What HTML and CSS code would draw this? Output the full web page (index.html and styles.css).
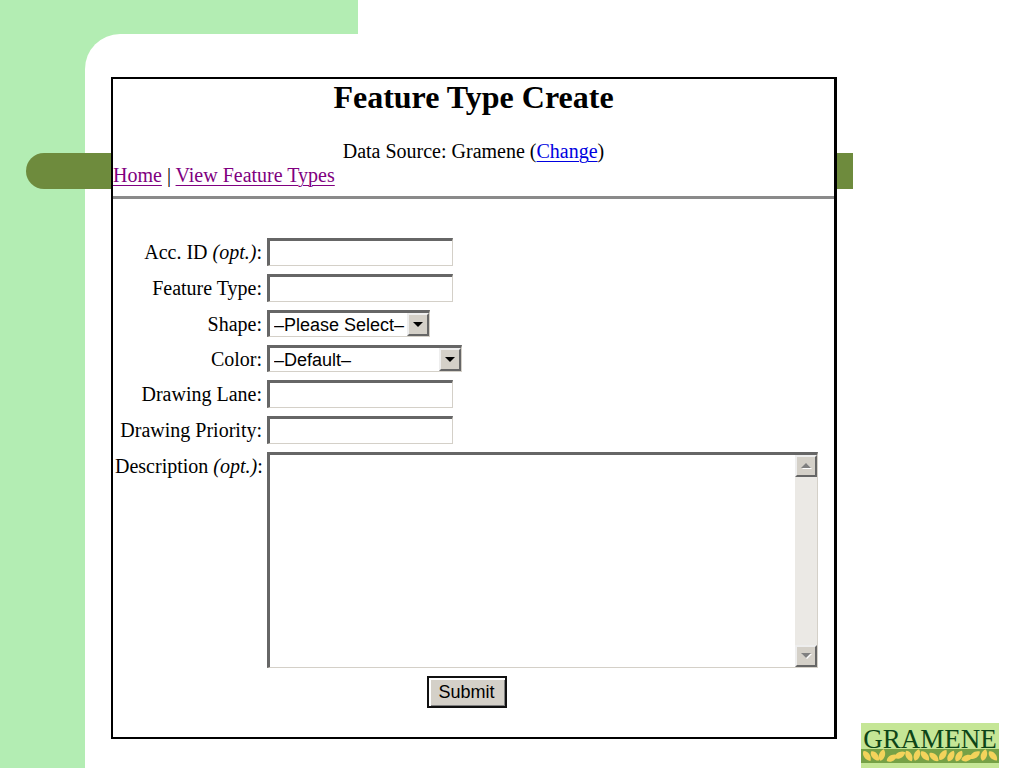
FILE: index.html
```
<!DOCTYPE html>
<html lang="en">
<head>
    <meta charset="UTF-8">
    <meta name="viewport" content="width=device-width, initial-scale=1.0">
    <title>Feature Type Create</title>
    <link rel="stylesheet" href="styles.css">
</head>
<body>
    <div class="slide">
        <div class="sheet">
            <div class="title-bar"></div>
            <main class="frame">
                <h1>Feature Type Create</h1>
                <p class="source">Data Source: Gramene (<a href="#change">Change</a>)</p>
                <nav><a href="#home">Home</a> | <a href="#types">View Feature Types</a></nav>
                <hr>
                <form id="featureTypeForm">
                    <div class="row">
                        <label for="accId">Acc. ID <i>(opt.)</i>:</label>
                        <input type="text" id="accId" name="accId">
                    </div>
                    <div class="row">
                        <label for="featureType">Feature Type:</label>
                        <input type="text" id="featureType" name="featureType">
                    </div>
                    <div class="row">
                        <label for="shape">Shape:</label>
                        <div class="select-box shape-box">
                            <select id="shape" name="shape">
                                <option>–Please Select–</option>
                            </select>
                            <span class="arrow-button"><svg width="10" height="5" viewBox="0 0 10 5"><path d="M0 0h10L5 5z"/></svg></span>
                        </div>
                    </div>
                    <div class="row">
                        <label for="color">Color:</label>
                        <div class="select-box color-box">
                            <select id="color" name="color">
                                <option>–Default–</option>
                            </select>
                            <span class="arrow-button"><svg width="10" height="5" viewBox="0 0 10 5"><path d="M0 0h10L5 5z"/></svg></span>
                        </div>
                    </div>
                    <div class="row">
                        <label for="lane">Drawing Lane:</label>
                        <input type="text" id="lane" name="lane">
                    </div>
                    <div class="row">
                        <label for="priority">Drawing Priority:</label>
                        <input type="text" id="priority" name="priority">
                    </div>
                    <div class="row">
                        <label for="description">Description <i>(opt.)</i>:</label>
                        <div class="textarea-box">
                            <textarea id="description" name="description"></textarea>
                            <div class="scrollbar">
                                <span class="arrow-button disabled"><svg width="11" height="6" viewBox="0 0 11 6"><path fill="#fff" d="M1 6h10L6 1z"/><path d="M0 5h10L5 0z"/></svg></span>
                                <span class="arrow-button disabled"><svg width="11" height="6" viewBox="0 0 11 6"><path fill="#fff" d="M1 1h10L6 6z"/><path d="M0 0h10L5 5z"/></svg></span>
                            </div>
                        </div>
                    </div>
                    <button type="submit">Submit</button>
                </form>
            </main>
            <div class="logo">
                <span class="logo-name">GRAMENE</span>
                <svg class="logo-leaves" viewBox="0 0 138 14" preserveAspectRatio="none">
                    <defs>
                        <path id="leaf" d="M-6 0C-4-4 3-4 6 0C3 4-4 4-6 0z"/>
                    </defs>
                    <g fill="#f3d35b">
                        <use href="#leaf" transform="translate(6 7) rotate(55)"/>
                        <use href="#leaf" transform="translate(14 7) rotate(50)"/>
                        <use href="#leaf" transform="translate(21 6) rotate(-72)"/>
                        <use href="#leaf" transform="translate(31 9) rotate(-30)"/>
                        <use href="#leaf" transform="translate(39 6) rotate(-28)"/>
                        <use href="#leaf" transform="translate(48 7) rotate(62)"/>
                        <use href="#leaf" transform="translate(56 6) rotate(-70)"/>
                        <use href="#leaf" transform="translate(64 7) rotate(48)"/>
                        <use href="#leaf" transform="translate(73 8) rotate(42)"/>
                        <use href="#leaf" transform="translate(82 6) rotate(-55)"/>
                        <use href="#leaf" transform="translate(90 7) rotate(-62)"/>
                        <use href="#leaf" transform="translate(98 7) rotate(-60)"/>
                        <use href="#leaf" transform="translate(106 9) rotate(-20)"/>
                        <use href="#leaf" transform="translate(114 6) rotate(-35)"/>
                        <use href="#leaf" transform="translate(123 6) rotate(-72)"/>
                        <use href="#leaf" transform="translate(132 7) rotate(48)"/>
                    </g>
                </svg>
            </div>
        </div>
    </div>
</body>
</html>
```
FILE: styles.css
```
* {
    box-sizing: border-box;
}

body {
    margin: 0;
    background-color: #fff;
    color: #000;
    font-family: "Liberation Serif", "Times New Roman", serif;
    font-size: 20px;
    line-height: 24px;
}

/* green corner: the sheet covers all but its top and left edge */
.slide {
    min-height: 100vh;
    padding: 34px 0 0 85px;
    background: linear-gradient(#b3edb3, #b3edb3) no-repeat 0 0 / 358px 100%;
}

.sheet {
    position: relative;
    display: flex;
    align-items: flex-start;
    min-height: calc(100vh - 34px);
    padding: 43px 25px 0 26px;
    background-color: #fff;
    border-top-left-radius: 35px;
}

.title-bar {
    position: absolute;
    top: 119px;
    left: -59px;
    right: 171px;
    height: 36px;
    background-color: #6e8b3d;
    border-radius: 18px 0 0 18px;
}

.frame {
    position: relative;
    flex: 1;
    padding-bottom: 29px;
    background-color: #fff;
    border: 2px solid #000;
    border-right-width: 3px;
}

h1 {
    margin: 0 0 24px;
    font-size: 32px;
    line-height: 36px;
    text-align: center;
}

.source {
    margin: 0;
    text-align: center;
}

a {
    color: #0000e0;
    text-decoration-thickness: 1px;
    text-underline-offset: 3px;
}

nav a {
    color: #800080;
}

hr {
    height: 3px;
    margin: 9px 0 39px;
    border: 0;
    background-color: #8a8a8a;
}

form {
    display: flex;
    flex-direction: column;
    gap: 8px;
    padding: 0 16px 0 2px;
}

.row {
    display: flex;
    gap: 5px;
}

label {
    width: 147px;
    padding-top: 2px;
    text-align: right;
    white-space: nowrap;
}

input,
.select-box,
.textarea-box {
    background-color: #fff;
    border: 1px solid #d4d0c8;
    border-top: 3px solid #666;
    border-left: 3px solid #666;
}

input,
select,
textarea,
button {
    margin: 0;
    border-radius: 0;
    font-family: "Liberation Sans", Arial, sans-serif;
    font-size: 18px;
}

input {
    width: 186px;
    height: 28px;
    padding: 0 4px;
}

.select-box {
    display: flex;
    position: relative;
    height: 27px;
}

.shape-box {
    width: 163px;
}

.color-box {
    width: 195px;
}

select {
    flex: 1;
    padding: 0 24px 0 4px;
    appearance: none;
    border: 0;
    background: none;
    color: #000;
}

.arrow-button {
    display: flex;
    align-items: center;
    justify-content: center;
    width: 22px;
    height: 22px;
    background-color: #d4d0c8;
    border: 2px solid #666;
    border-top-color: #eee;
    border-left-color: #eee;
}

.select-box .arrow-button {
    position: absolute;
    top: 0;
    right: 0;
    height: 100%;
    pointer-events: none;
}

.disabled {
    fill: #808080;
}

.textarea-box {
    display: flex;
    flex: 1;
    height: 216px;
}

textarea {
    flex: 1;
    min-width: 0;
    padding: 2px 4px;
    border: 0;
    background: none;
    resize: none;
}

.scrollbar {
    display: flex;
    flex-direction: column;
    justify-content: space-between;
    background-color: #ebe9e5;
}

button {
    align-self: center;
    width: 80px;
    height: 32px;
    padding: 0;
    background-color: #d4d0c8;
    border: 2px solid #111;
    box-shadow: inset 2px 2px #fff, inset -1px -1px #808080;
    color: #000;
}

.logo {
    display: flex;
    flex-direction: column;
    align-self: flex-end;
    width: 138px;
    height: 45px;
    margin-left: 24px;
    background-color: #c5e696;
}

.logo-name {
    height: 26px;
    color: #0d4517;
    font-size: 27px;
    line-height: 32px;
    text-align: center;
}

.logo-leaves {
    width: 100%;
    height: 14px;
    background-color: #76a146;
}
```
